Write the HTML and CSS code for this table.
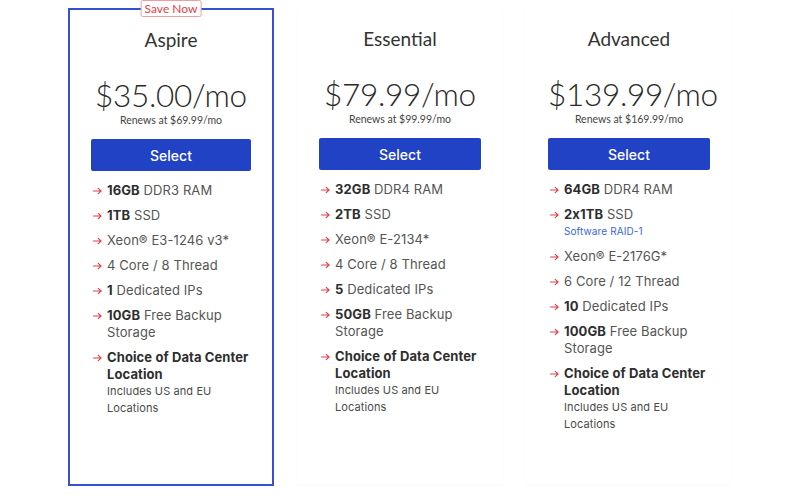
FILE: index.html
```html
<!DOCTYPE html>
<html>
<head>
<meta charset="utf-8">
<link rel="stylesheet" href="styles.css">
</head>
<body>
<div class="plans">
  <div class="card featured">
    <div class="badge">Save Now</div>
    <h2 class="title">Aspire</h2>
    <div class="price">$35.00/mo</div>
    <div class="renew">Renews at $69.99/mo</div>
    <button class="select">Select</button>
    <ul class="features">
      <li><svg class="arr" viewBox="0 0 10 8"><path d="M0.5 4H9M5.8 1L9 4L5.8 7"/></svg><span><b>16GB</b> DDR3 RAM</span></li>
      <li><svg class="arr" viewBox="0 0 10 8"><path d="M0.5 4H9M5.8 1L9 4L5.8 7"/></svg><span><b>1TB</b> SSD</span></li>
      <li><svg class="arr" viewBox="0 0 10 8"><path d="M0.5 4H9M5.8 1L9 4L5.8 7"/></svg><span>Xeon® E3-1246 v3*</span></li>
      <li><svg class="arr" viewBox="0 0 10 8"><path d="M0.5 4H9M5.8 1L9 4L5.8 7"/></svg><span>4 Core / 8 Thread</span></li>
      <li><svg class="arr" viewBox="0 0 10 8"><path d="M0.5 4H9M5.8 1L9 4L5.8 7"/></svg><span><b>1</b> Dedicated IPs</span></li>
      <li><svg class="arr" viewBox="0 0 10 8"><path d="M0.5 4H9M5.8 1L9 4L5.8 7"/></svg><span><b>10GB</b> Free Backup<br>Storage</span></li>
      <li><svg class="arr" viewBox="0 0 10 8"><path d="M0.5 4H9M5.8 1L9 4L5.8 7"/></svg><span><b>Choice of Data Center Location</b><small class="note">Includes US and EU Locations</small></span></li>
    </ul>
  </div>
  <div class="card">
    <h2 class="title">Essential</h2>
    <div class="price">$79.99/mo</div>
    <div class="renew">Renews at $99.99/mo</div>
    <button class="select">Select</button>
    <ul class="features">
      <li><svg class="arr" viewBox="0 0 10 8"><path d="M0.5 4H9M5.8 1L9 4L5.8 7"/></svg><span><b>32GB</b> DDR4 RAM</span></li>
      <li><svg class="arr" viewBox="0 0 10 8"><path d="M0.5 4H9M5.8 1L9 4L5.8 7"/></svg><span><b>2TB</b> SSD</span></li>
      <li><svg class="arr" viewBox="0 0 10 8"><path d="M0.5 4H9M5.8 1L9 4L5.8 7"/></svg><span>Xeon® E-2134*</span></li>
      <li><svg class="arr" viewBox="0 0 10 8"><path d="M0.5 4H9M5.8 1L9 4L5.8 7"/></svg><span>4 Core / 8 Thread</span></li>
      <li><svg class="arr" viewBox="0 0 10 8"><path d="M0.5 4H9M5.8 1L9 4L5.8 7"/></svg><span><b>5</b> Dedicated IPs</span></li>
      <li><svg class="arr" viewBox="0 0 10 8"><path d="M0.5 4H9M5.8 1L9 4L5.8 7"/></svg><span><b>50GB</b> Free Backup<br>Storage</span></li>
      <li><svg class="arr" viewBox="0 0 10 8"><path d="M0.5 4H9M5.8 1L9 4L5.8 7"/></svg><span><b>Choice of Data Center Location</b><small class="note">Includes US and EU Locations</small></span></li>
    </ul>
  </div>
  <div class="card">
    <h2 class="title">Advanced</h2>
    <div class="price">$139.99/mo</div>
    <div class="renew">Renews at $169.99/mo</div>
    <button class="select">Select</button>
    <ul class="features">
      <li><svg class="arr" viewBox="0 0 10 8"><path d="M0.5 4H9M5.8 1L9 4L5.8 7"/></svg><span><b>64GB</b> DDR4 RAM</span></li>
      <li><svg class="arr" viewBox="0 0 10 8"><path d="M0.5 4H9M5.8 1L9 4L5.8 7"/></svg><span><b>2x1TB</b> SSD<small class="raid">Software RAID-1</small></span></li>
      <li><svg class="arr" viewBox="0 0 10 8"><path d="M0.5 4H9M5.8 1L9 4L5.8 7"/></svg><span>Xeon® E-2176G*</span></li>
      <li><svg class="arr" viewBox="0 0 10 8"><path d="M0.5 4H9M5.8 1L9 4L5.8 7"/></svg><span>6 Core / 12 Thread</span></li>
      <li><svg class="arr" viewBox="0 0 10 8"><path d="M0.5 4H9M5.8 1L9 4L5.8 7"/></svg><span><b>10</b> Dedicated IPs</span></li>
      <li><svg class="arr" viewBox="0 0 10 8"><path d="M0.5 4H9M5.8 1L9 4L5.8 7"/></svg><span><b>100GB</b> Free Backup<br>Storage</span></li>
      <li><svg class="arr" viewBox="0 0 10 8"><path d="M0.5 4H9M5.8 1L9 4L5.8 7"/></svg><span><b>Choice of Data Center Location</b><small class="note">Includes US and EU Locations</small></span></li>
    </ul>
  </div>
</div>
</body>
</html>
```

FILE: styles.css
```css
html, body {
  margin: 0;
  padding: 0;
  background: #ffffff;
}
body {
  width: 800px;
  height: 500px;
  overflow: hidden;
  font-family: "Inter", "Open Sans", sans-serif;
  color: #3a3a3a;
}
.plans {
  display: flex;
  gap: 23px;
  padding: 8px 0 0 68px;
  align-items: flex-start;
}
.card {
  position: relative;
  box-sizing: border-box;
  width: 206px;
  height: 476px;
  border: 1px solid transparent;
  padding: 18px 21px 0 21px;
  display: flex;
  flex-direction: column;
  align-items: stretch;
  box-shadow: 0 1px 4px rgba(0, 0, 0, 0.025);
}
.card.featured {
  height: 478px;
  border: 2px solid #3551d2;
  box-shadow: none;
}
.badge {
  position: absolute;
  top: -10px;
  left: 50%;
  transform: translateX(-50%);
  background: #fff;
  border: 1px solid #eca0a6;
  border-radius: 2px;
  color: #e0404b;
  font-family: "Lato", "Open Sans", sans-serif;
  font-size: 12px;
  line-height: 15px;
  padding: 0 3px;
  white-space: nowrap;
}
.title {
  margin: 0;
  text-align: center;
  font-family: "Lato", "Open Sans", sans-serif;
  font-weight: 400;
  font-size: 19px;
  line-height: 24px;
  color: #333;
}
.price {
  margin-top: 24px;
  text-align: center;
  font-family: "Lato", "Open Sans", sans-serif;
  font-weight: 300;
  font-size: 31.5px;
  line-height: 38px;
  color: #2a2a2a;
  letter-spacing: -0.3px;
}
.renew {
  margin-top: 0;
  text-align: center;
  font-family: "Lato", "Open Sans", sans-serif;
  font-size: 10.5px;
  line-height: 13px;
  color: #444;
}
.select {
  margin-top: 12px;
  height: 32px;
  border: 0;
  border-radius: 2px;
  background: #2142c4;
  color: #fff;
  font-family: "Inter", "Lato", sans-serif;
  font-size: 14px;
  font-weight: 500;
  cursor: pointer;
}
.features {
  list-style: none;
  margin: 11px 0 0 2px;
  padding: 0;
  display: flex;
  flex-direction: column;
  gap: 8px;
}
.features li {
  display: flex;
  align-items: flex-start;
  gap: 5px;
  font-family: "Inter", "Open Sans", sans-serif;
  font-size: 13px;
  line-height: 17px;
  color: #555555;
  letter-spacing: 0.1px;
}
.features b {
  font-weight: 700;
  color: #2e2e2e;
}
.arr {
  flex: none;
  width: 9px;
  height: 8px;
  margin-top: 5px;
  fill: none;
  stroke: #e0404b;
  stroke-width: 1.2;
  stroke-linecap: round;
  stroke-linejoin: round;
}
.note {
  display: block;
  font-size: 11px;
  line-height: 17px;
  color: #4a4a4a;
}
.raid {
  display: block;
  font-size: 10px;
  line-height: 17px;
  color: #3a66d8;
}
```
